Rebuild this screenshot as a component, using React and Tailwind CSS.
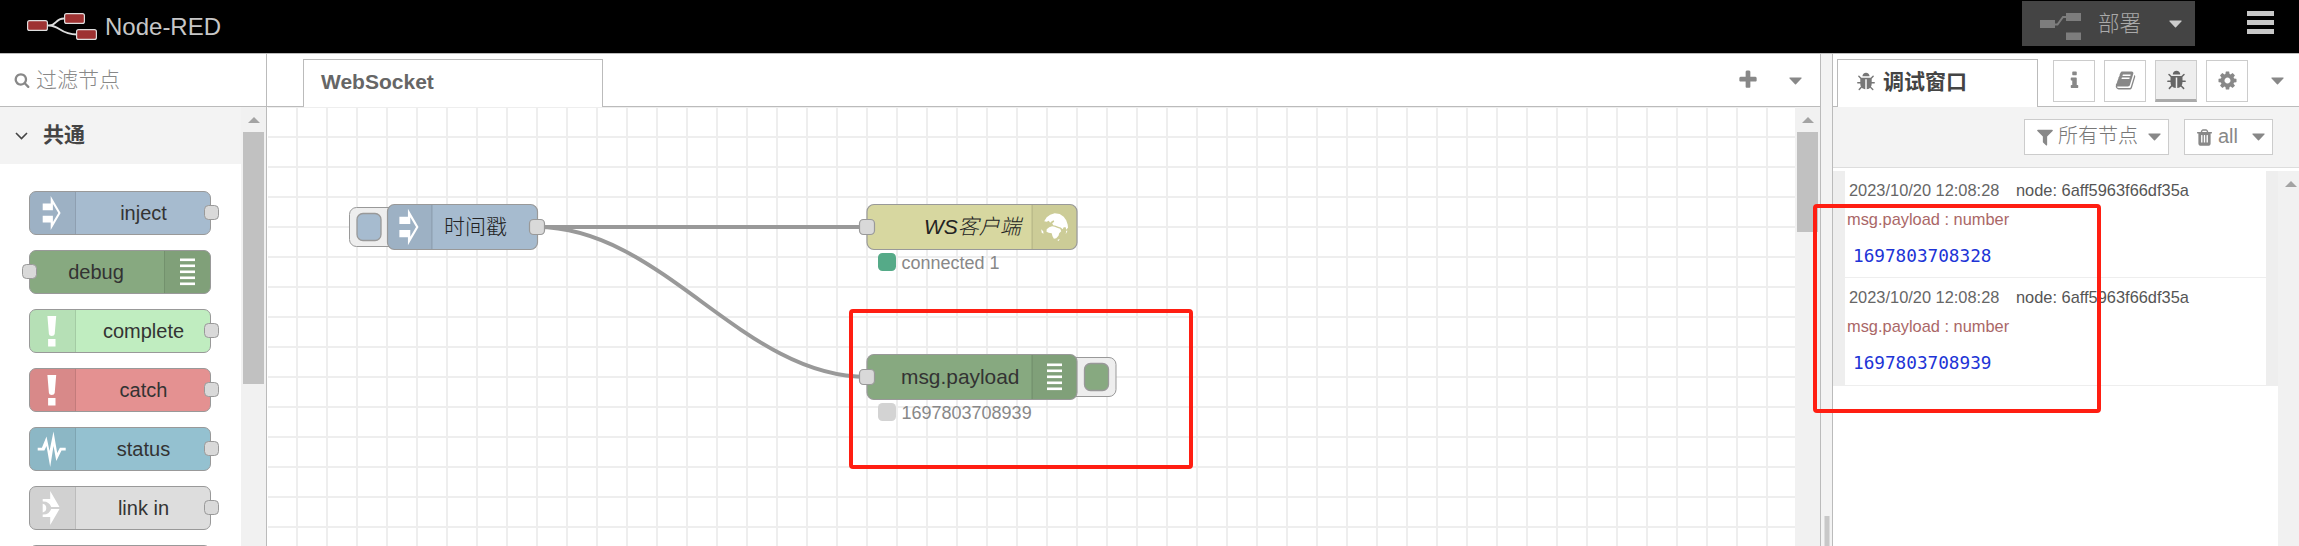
const P = {
  cog: 'M1152 896q0-106-75-181t-181-75-181 75-75 181 75 181 181 75 181-75 75-181zm512-109v222q0 12-8 23t-20 13l-185 28q-19 54-39 91 35 50 107 138 10 12 10 25t-9 23q-27 37-99 108t-94 71q-12 0-26-9l-138-108q-44 23-91 38-16 136-29 186-7 28-36 28h-222q-14 0-24.5-8.5t-11.5-21.5l-28-184q-49-16-90-37l-141 107q-10 9-25 9-14 0-25-11-126-114-165-168-7-10-7-23 0-12 8-23 15-21 51-66.5t54-70.5q-27-50-41-99l-183-27q-13-2-21-12.5t-8-23.5v-222q0-12 8-23t19-13l186-28q14-46 39-92-40-57-107-138-10-12-10-24 0-10 9-23 26-36 98.5-107.5t94.5-71.5q13 0 26 10l138 107q44-23 91-38 16-136 29-186 7-28 36-28h222q14 0 24.5 8.5t11.5 21.5l28 184q49 16 90 37l142-107q9-9 24-9 13 0 25 10 129 119 165 170 7 8 7 22 0 12-8 23-15 21-51 66.5t-54 70.5q26 50 41 98l183 28q13 2 21 12.5t8 23.5z',
  trash: 'M704 700v640q0 14-9 23t-23 9h-64q-14 0-23-9t-9-23v-640q0-14 9-23t23-9h64q14 0 23 9t9 23zm256 0v640q0 14-9 23t-23 9h-64q-14 0-23-9t-9-23v-640q0-14 9-23t23-9h64q14 0 23 9t9 23zm256 0v640q0 14-9 23t-23 9h-64q-14 0-23-9t-9-23v-640q0-14 9-23t23-9h64q14 0 23 9t9 23zm-544-316h448l-48-117q-7-9-17-11h-317q-10 2-17 11zm928 32v64q0 14-9 23t-23 9h-96v948q0 83-47 143.5t-113 60.5h-832q-66 0-113-58.5t-47-141.5v-952h-96q-14 0-23-9t-9-23v-64q0-14 9-23t23-9h309l70-167q15-37 54-63t79-26h320q40 0 79 26t54 63l70 167h309q14 0 23 9t9 23z',
  filter: 'M1595 295q17 41-14 70l-493 493v742q0 42-39 59-13 5-25 5-27 0-45-19l-256-256q-19-19-19-45v-486l-493-493q-31-29-14-70 17-39 59-39h1280q42 0 59 39z',
  plus: 'M1600 736v192q0 40-28 68t-68 28h-416v416q0 40-28 68t-68 28h-192q-40 0-68-28t-28-68v-416h-416q-40 0-68-28t-28-68v-192q0-40 28-68t68-28h416v-416q0-40 28-68t68-28h192q40 0 68 28t28 68v416h416q40 0 68 28t28 68z',
  search: 'M1216 832q0-185-131.5-316.5t-316.5-131.5-316.5 131.5-131.5 316.5 131.5 316.5 316.5 131.5 316.5-131.5 131.5-316.5zm512 832q0 52-38 90t-90 38q-54 0-90-38l-343-342q-179 124-399 124-143 0-273.5-55.5t-225-150-150-225-55.5-273.5 55.5-273.5 150-225 225-150 273.5-55.5 273.5 55.5 225 150 150 225 55.5 273.5q0 220-124 399l343 343q37 37 37 90z',
  info: 'M1216 1344v128q0 26-19 45t-45 19h-512q-26 0-45-19t-19-45v-128q0-26 19-45t45-19h64v-384h-64q-26 0-45-19t-19-45v-128q0-26 19-45t45-19h384q26 0 45 19t19 45v576h64q26 0 45 19t19 45zm-128-1152v192q0 26-19 45t-45 19h-256q-26 0-45-19t-19-45v-192q0-26 19-45t45-19h256q26 0 45 19t19 45z',
  book: 'M1703 478q40 57 18 129l-275 906q-19 64-76.5 107.5t-122.5 43.5h-923q-77 0-148.5-53.5t-99.5-131.5q-24-67-2-127 0-4 3-27t4-37q1-8-3-21.5t-3-19.5q2-11 8-21t16.5-23.5 16.5-23.5q23-38 45-91.5t30-91.5q3-10 .5-30t-.5-28q3-11 17-28t17-23q21-36 42-92t25-90q1-9-2.5-32t.5-28q4-13 22-30.5t22-22.5q19-26 42.5-84.5t27.5-96.5q1-8-3-25.5t-2-26.5q2-8 9-18t18-23 17-21q8-12 16.5-30.5t15-35 16-36 19.5-32 26.5-23.5 36-11.5 47.5 5.5l-1 3q38-9 51-9h761q74 0 114 56t18 130l-274 906q-36 119-71.5 153.5t-128.5 34.5h-869q-27 0-38 15-11 16-1 43 24 70 144 70h923q29 0 56-15.5t35-41.5l300-987q7-22 5-57 38 15 59 43zm-1064 2q-4 13 2 22.5t20 9.5h608q13 0 25.5-9.5t16.5-22.5l21-64q4-13-2-22.5t-20-9.5h-608q-13 0-25.5 9.5t-16.5 22.5zm-83 256q-4 13 2 22.5t20 9.5h608q13 0 25.5-9.5t16.5-22.5l21-64q4-13-2-22.5t-20-9.5h-608q-13 0-25.5 9.5t-16.5 22.5z',
  bug: 'M1696 960q0 26-19 45t-45 19h-224q0 171-67 290l208 209q19 19 19 45t-19 45q-18 19-45 19t-45-19l-198-197q-5 5-15 13t-42 28.5-65 36.5-82 29-97 13v-896h-128v896q-51 0-101.5-13.5t-87-33-66-39-43.5-32.5l-15-14-183 207q-20 21-48 21-24 0-43-16-19-18-20.5-44.5t15.5-46.5l202-227q-58-114-58-274h-224q-26 0-45-19t-19-45 19-45 45-19h224v-294l-173-173q-19-19-19-45t19-45 45-19 45 19l173 173h844l173-173q19-19 45-19t45 19 19 45-19 45l-173 173v294h224q26 0 45 19t19 45zm-480-576h-640q0-133 93.5-226.5t226.5-93.5 226.5 93.5 93.5 226.5z',
};

const Icon = ({ name, size = 20, className = '' }) => (
  <svg width={size} height={size} viewBox="0 0 1792 1792" fill="currentColor" className={'shrink-0 ' + className}>
    <path fillRule={name === 'trash' ? 'evenodd' : 'nonzero'} d={P[name]} />
  </svg>
);

const Caret = ({ className = '' }) => (
  <svg width="13" height="8" viewBox="0 0 13 8" fill="currentColor" className={'shrink-0 ' + className}>
    <path d="M0.6 0.5H12.4Q12.9 1 12.4 1.6L7 7.3Q6.5 7.7 6 7.3L0.6 1.6Q0.1 1 0.6 0.5Z" />
  </svg>
);

const ScrollArrow = ({ className = '' }) => (
  <svg width="12" height="6" viewBox="0 0 12 6" className={'shrink-0 ' + className}>
    <path d="M6 0L12 6H0Z" fill="#a3a3a3" />
  </svg>
);

/* Node glyphs, centred on 0,0 */
const Glyph = ({ kind }) => {
  if (kind === 'inject')
    return <path fill="#fff" fillRule="evenodd" d="M-9 -9.500H-1V-17L8.900 0L-1 17V9.500H-9V2.800H1.200V9L6.600 0L1.200 -9V-2.800H-9Z" />;
  if (kind === 'debug')
    return (
      <g fill="#fff">
        {[-12.5, -6.5, -0.5, 5.5, 11.5].map((y) => <rect key={y} x="-7" y={y - 1} width="15" height="2.6" />)}
      </g>
    );
  if (kind === 'bang')
    return <path fill="#fff" d="M-4.3 -15H4.5L3 3Q2.6 5 0 5T-2.8 3ZM-3.6 8H3.8V15.5H-3.6Z" />;
  if (kind === 'status')
    return <path fill="#fff" d="M-14 -1.2H-9.800L-5.200 -12.500L-2.200 2L1.800 -17.500L5.500 4L8.200 -1.200H14V1.500H9.800L4.600 12L1.800 -3L-1.500 18L-5.200 -3L-7.300 1.500H-14Z" />;
  if (kind === 'link')
    return (
      <g fill="#fff">
        <path d="M-9 -9H-1.500V-17L7.800 -1H-.5A8.500 8.500 0 0 0 -9 -6.500Z" />
        <path d="M-9 9H-1.500V17L7.800 1H-.5A8.500 8.500 0 0 1 -9 6.500Z" />
        <path d="M-9 -4.300A4.500 4.500 0 0 1 -9 4.500Z" />
      </g>
    );
  return (
    <g fill="#fff">
      <path d="M-10.500 -5.500L-8 -9.500L-4.500 -12L0 -13.500L5 -12.800L9 -10L11.500 -6.500L13 -2L13.300 1L11.500 3L11 .5L9 .5L8 2.500L6 .8L3.500 0L1 -1L-1.500 -1.500L-2.500 -3.500L-.5 -5L-1 -6.500L-3 -5.500L-4.500 -4L-6 -6L-8 -5Z" />
      <path d="M-8 2.500L-5.500 .5L-2.500 -.5L0 0L3 1.200L5.500 2L6.500 4.500L4.500 6.500L3.800 9L1.500 11.500L-.8 12L-2.200 9.500L-3 6.500L-6 6L-8.200 5Z" />
      <path d="M-13.500 2.500L-11.500 4.500L-11.200 7L-13 6ZM2.500 13.300L5 12.300L4 14.200ZM11.500 4L12.800 4L11 7.500Z" />
    </g>
  );
};

const font = 'Liberation Sans, "Noto Sans CJK SC", sans-serif';

const palette = [
  { label: 'inject', fill: '#a6bbcf', icon: 'inject' },
  { label: 'debug', fill: '#87a980', icon: 'debug', right: true },
  { label: 'complete', fill: '#c0edc0', icon: 'bang' },
  { label: 'catch', fill: '#e49191', icon: 'bang' },
  { label: 'status', fill: '#94c1d0', icon: 'status' },
  { label: 'link in', fill: '#dddddd', icon: 'link' },
  { label: '', fill: '#dddddd', icon: 'link' },
];

const PaletteNode = ({ label, fill, icon, right }) => (
  <svg width="220" height="44" viewBox="0 0 220 44" className="block shrink-0">
    <rect x="29.5" y=".5" width="181" height="43" rx="6.5" fill={fill} />
    {right ? (
      <path d="M164.5 .5H204a6.5 6.5 0 0 1 6.5 6.5V37a6.5 6.5 0 0 1 -6.5 6.5H164.5Z" fill="#000" fillOpacity=".05" />
    ) : (
      <path d="M75.500 .5H36a6.5 6.5 0 0 0 -6.5 6.5V37a6.5 6.5 0 0 0 6.5 6.5H75.500Z" fill="#000" fillOpacity=".05" />
    )}
    <path d={right ? 'M164.500 1V43' : 'M75.500 1V43'} stroke="#000" strokeOpacity=".12" />
    <rect x="29.5" y=".5" width="181" height="43" rx="6.500" fill="none" stroke="#999" />
    <g transform={right ? 'translate(187,22)' : 'translate(51.700,22)'}><Glyph kind={icon} /></g>
    {label && <text x={right ? 96 : 143.500} y="28.500" textAnchor="middle" fontSize="20" fill="#333" fontFamily={font}>{label}</text>}
    <rect x={right ? 22.5 : 204.5} y="14.5" width="14" height="14" rx="4" fill="#d9d9d9" stroke="#999" />
  </svg>
);

const Port = ({ x, y }) => <rect x={x - 7.5} y={y - 7.5} width="15" height="15" rx="4" fill="#d9d9d9" stroke="#999" strokeWidth="1.2" />;

const Flow = () => (
  <svg width="1528" height="439" viewBox="267 107 1528 439" className="block" fontFamily={font}>
    <defs>
      <pattern id="grid" x="296" y="106" width="30" height="30" patternUnits="userSpaceOnUse">
        <path d="M1 0V30M0 1H30" stroke="#eee" strokeWidth="2" />
      </pattern>
    </defs>
    <rect x="268" y="107" width="1527" height="439" fill="url(#grid)" />
    <path d="M537 227H867" stroke="#999" strokeWidth="4" />
    <path d="M537 227C662 227 742 377 867 377" fill="none" stroke="#999" strokeWidth="4" />

    <rect x="349.500" y="207.500" width="50" height="39" rx="7" fill="#eee" stroke="#999" />
    <rect x="357" y="213.500" width="24" height="27" rx="6" fill="#a6bbcf" stroke="#999" strokeWidth="1.3" />
    <rect x="387.500" y="204.500" width="150" height="45" rx="7" fill="#a6bbcf" />
    <path d="M432 204.500H394.500a7 7 0 0 0 -7 7V242.500a7 7 0 0 0 7 7H432Z" fill="#000" fillOpacity=".05" />
    <path d="M432 205V249" stroke="#000" strokeOpacity=".1" strokeWidth="1.500" />
    <rect x="387.500" y="204.500" width="150" height="45" rx="7" fill="none" stroke="#999" strokeWidth="1.200" />
    <g transform="translate(409,227) scale(1.07)"><Glyph kind="inject" /></g>
    <text x="475.500" y="234" fontSize="21" fontWeight="300" textAnchor="middle" fill="#222">时间戳</text>
    <Port x={537} y={227} />

    <rect x="867" y="204.500" width="210" height="45" rx="7" fill="#d7d7a0" />
    <path d="M1032 204.500H1070a7 7 0 0 1 7 7V242.500a7 7 0 0 1 -7 7H1032Z" fill="#000" fillOpacity=".05" />
    <path d="M1032 205V249" stroke="#000" strokeOpacity=".1" strokeWidth="1.500" />
    <rect x="867" y="204.500" width="210" height="45" rx="7" fill="none" stroke="#999" strokeWidth="1.200" />
    <g transform="translate(1054.700,226.700)"><Glyph kind="globe" /></g>
    <text x="924" y="234" fontSize="21" fontStyle="italic" fontWeight="300" fill="#222">WS客户端</text>
    <Port x={867} y={227} />
    <rect x="878" y="253" width="18" height="18" rx="4.500" fill="#5a8" />
    <text x="901.500" y="269" fontSize="18" fill="#888">connected 1</text>

    <rect x="1060" y="357.500" width="56" height="39" rx="7" fill="#eee" stroke="#999" />
    <rect x="867" y="354.500" width="210" height="45" rx="7" fill="#87a980" />
    <path d="M1032 354.500H1070a7 7 0 0 1 7 7V392.500a7 7 0 0 1 -7 7H1032Z" fill="#000" fillOpacity=".05" />
    <path d="M1032 355V399" stroke="#000" strokeOpacity=".1" strokeWidth="1.500" />
    <rect x="867" y="354.500" width="210" height="45" rx="7" fill="none" stroke="#999" strokeWidth="1.200" />
    <rect x="1084.500" y="363.500" width="24" height="27" rx="6" fill="#87a980" stroke="#999" strokeWidth="1.300" />
    <g transform="translate(1054,377)"><Glyph kind="debug" /></g>
    <text x="901" y="384" fontSize="20.900" fill="#333">msg.payload</text>
    <Port x={867} y={377} />
    <rect x="878" y="403" width="18" height="18" rx="4.500" fill="#d3d3d3" />
    <text x="901.500" y="419" fontSize="18" fill="#888">1697803708939</text>
  </svg>
);

const Message = ({ value, className }) => (
  <div className={'mx-3 flex flex-col border-b border-[#eee] bg-white ' + className}>
    <div className="ml-1 mt-[7px] flex h-6 items-center text-[16.400px] leading-6">
      <span className="w-[167px] text-[#666]">2023/10/20 12:08:28</span>
      <span className="text-[16.400px] text-[#555]">node: 6aff5963f66df35a</span>
    </div>
    <div className="ml-[2px] mt-[5px] h-6 text-[16.400px] leading-6 text-[#aa6767]">msg.payload : number</div>
    <div className="ml-2 mt-[13px] h-6 font-['DejaVu_Sans_Mono',monospace] text-[17.700px] leading-6 text-[#2033d6]">{value}</div>
  </div>
);

const SideButton = ({ name, active }) => (
  <div className={active ? 'flex h-[42px] w-[42px] flex-col items-center border border-b-[3px] border-[#ccc] border-b-[#aaa] bg-[#eee] text-[#666]' : 'flex h-[42px] w-[42px] flex-col items-center border border-[#ccc] bg-white text-[#888]'}>
    <Icon name={name} size={21} className="mt-[9px]" />
  </div>
);

export default function App() {
  return (
    <div className="relative flex h-[546px] w-[2299px] flex-col overflow-hidden bg-white font-['Liberation_Sans','Noto_Sans_CJK_SC',sans-serif]">
      <header className="flex h-[53px] shrink-0 items-start bg-black">
        <svg width="71" height="30" viewBox="27 12 71 30" className="ml-[27px] mt-3 shrink-0">
          <path d="M47 25.500H49C57 25.500 55 18.500 64 18.500M49 25.500C60 25.500 60 34.500 77 34.500" fill="none" stroke="#ddd" strokeWidth="1.800" />
          <g fill="#9e3232" stroke="#ddd" strokeWidth="1.200">
            <rect x="27.600" y="20.600" width="19.800" height="9.800" rx="2" />
            <rect x="64.600" y="13.600" width="19.800" height="9.800" rx="2" />
            <rect x="76.600" y="29.600" width="19.800" height="9.800" rx="2" />
          </g>
        </svg>
        <div className="ml-[7px] mt-[11px] text-[24px] leading-8 text-[#c7c7c7]">Node-RED</div>
        <div className="ml-auto mr-[52px] mt-px flex h-[45px] w-[173px] items-center bg-[#444] pl-[18px]">
          <svg width="41" height="27" viewBox="0 0 41 27" className="mt-[5px] shrink-0">
            <path d="M15 11.500H17.500L23 4H26" fill="none" stroke="#7d7d7d" strokeWidth="2" />
            <g fill="#7d7d7d"><rect y="7" width="15" height="8" /><rect x="26" width="15" height="8" /><rect x="26" y="19.500" width="15" height="7.500" /></g>
          </svg>
          <span className="ml-[17px] text-[21.500px] font-light leading-8 text-[#aaa]">部署</span>
          <Caret className="ml-7 text-[#ccc]" />
        </div>
        <div className="mr-[25px] mt-[11px] flex w-[27px] flex-col gap-1">
          <div className="h-[5px] bg-[#c7c7c7]" />
          <div className="h-[5px] bg-[#c7c7c7]" />
          <div className="h-[5px] bg-[#c7c7c7]" />
        </div>
      </header>
      <div className="flex min-h-0 flex-1 border-t border-[#bbb]">
        <aside className="flex w-[267px] shrink-0 flex-col border-r border-[#bbb]">
          <div className="flex h-[53px] shrink-0 items-center border-b border-[#bbb] pl-3.5">
            <Icon name="search" size={16} className="text-[#888]" />
            <span className="ml-1.5 text-[21px] font-light leading-8 text-[#888]">过滤节点</span>
          </div>
          <div className="flex min-h-0 flex-1">
            <div className="flex w-[241px] flex-col overflow-hidden">
              <div className="flex h-[57px] shrink-0 items-center bg-[#f3f3f3] pl-[15px]">
                <svg width="13" height="8" viewBox="0 0 13 8" fill="none" stroke="#444" strokeWidth="1.600"><path d="M1 1L6.500 6.500L12 1" /></svg>
                <span className="-mt-0.5 ml-[15px] text-[21px] font-bold leading-8 text-[#444]">共通</span>
              </div>
              <div className="flex flex-col gap-[15px] pt-[27px]">
                {palette.map((n, i) => <PaletteNode key={i} {...n} />)}
              </div>
            </div>
            <div className="flex w-[25px] flex-col items-center bg-[#f1f1f1]">
              <ScrollArrow className="mt-2.5" />
              <div className="mt-[9px] h-[252px] w-[21px] bg-[#c1c1c1]" />
            </div>
          </div>
        </aside>
        <main className="flex w-[1554px] shrink-0 flex-col border-r border-[#bbb]">
          <div className="flex h-[53px] shrink-0">
            <div className="w-9 border-b border-[#bbb]" />
            <div className="mt-[5px] flex w-[300px] items-center border-x border-t border-[#bbb] pb-[3px] pl-[17px] text-[21px] font-bold text-[#666]">WebSocket</div>
            <div className="flex flex-1 items-center border-b border-[#bbb] text-[#888]">
              <Icon name="plus" size={22} className="ml-auto" />
              <Caret className="ml-[30px] mr-[18px] mt-0.5" />
            </div>
          </div>
          <div className="flex min-h-0 flex-1">
            <Flow />
            <div className="flex flex-1 flex-col items-center bg-[#f1f1f1]">
              <ScrollArrow className="mt-2.5" />
              <div className="mt-[9px] h-[100px] w-[21px] bg-[#c1c1c1]" />
            </div>
          </div>
        </main>
        <div className="flex w-[11px] shrink-0 flex-col items-center bg-[#f3f3f3]">
          <div className="mt-auto h-[30px] w-[6px] border-x border-[#ddd] bg-[#c8c8c8]" />
        </div>
        <aside className="flex min-w-0 flex-1 flex-col border-l border-[#bbb]">
          <div className="flex h-[53px] shrink-0">
            <div className="w-1 border-b border-[#bbb]" />
            <div className="mt-[5px] flex w-[201px] items-center border-x border-t border-[#bbb] pb-[3px] pl-[18px]">
              <Icon name="bug" size={20} className="text-[#777]" />
              <span className="ml-[7px] text-[21px] font-bold leading-8 text-[#444]">调试窗口</span>
            </div>
            <div className="flex flex-1 items-start gap-[9px] border-b border-[#bbb] pl-[15px] pt-1.5">
              <SideButton name="info" />
              <SideButton name="book" />
              <SideButton name="bug" active />
              <SideButton name="cog" />
              <Caret className="ml-auto mr-[15px] mt-[17px] text-[#888]" />
            </div>
          </div>
          <div className="flex h-[61px] shrink-0 items-start justify-end gap-[15px] border-b border-[#ddd] bg-[#f3f3f3] pr-[26px] pt-3 text-[20px] text-[#888]">
            <div className="flex h-9 w-[145px] items-center border border-[#ccc] bg-white pl-2.5">
              <Icon name="filter" size={20} />
              <span className="-mt-0.5 ml-[3px] font-light leading-8 text-[#777]">所有节点</span>
              <Caret className="ml-auto mr-[7px]" />
            </div>
            <div className="flex h-9 w-[89px] items-center border border-[#ccc] bg-white pl-2.5">
              <Icon name="trash" size={19} />
              <span className="-mt-0.5 ml-1 text-[20px]">all</span>
              <Caret className="ml-auto mr-[7px]" />
            </div>
          </div>
          <div className="flex min-h-0 flex-1 pt-[3px]">
            <div className="flex flex-1 flex-col">
              <div className="bg-[#eee]">
                <Message value="1697803708328" className="h-[107px]" />
                <Message value="1697803708939" className="h-[108px]" />
              </div>
            </div>
            <div className="flex w-[21px] flex-col items-center bg-[#f1f1f1]">
              <ScrollArrow className="ml-1 mt-2.5" />
            </div>
          </div>
        </aside>
      </div>
      <div className="absolute left-[849px] top-[309px] h-[160px] w-[344px] rounded border-4 border-[#ff1e12]" />
      <div className="absolute left-[1813px] top-[204px] h-[209px] w-[288px] rounded border-4 border-[#ff1e12]" />
    </div>
  );
}
